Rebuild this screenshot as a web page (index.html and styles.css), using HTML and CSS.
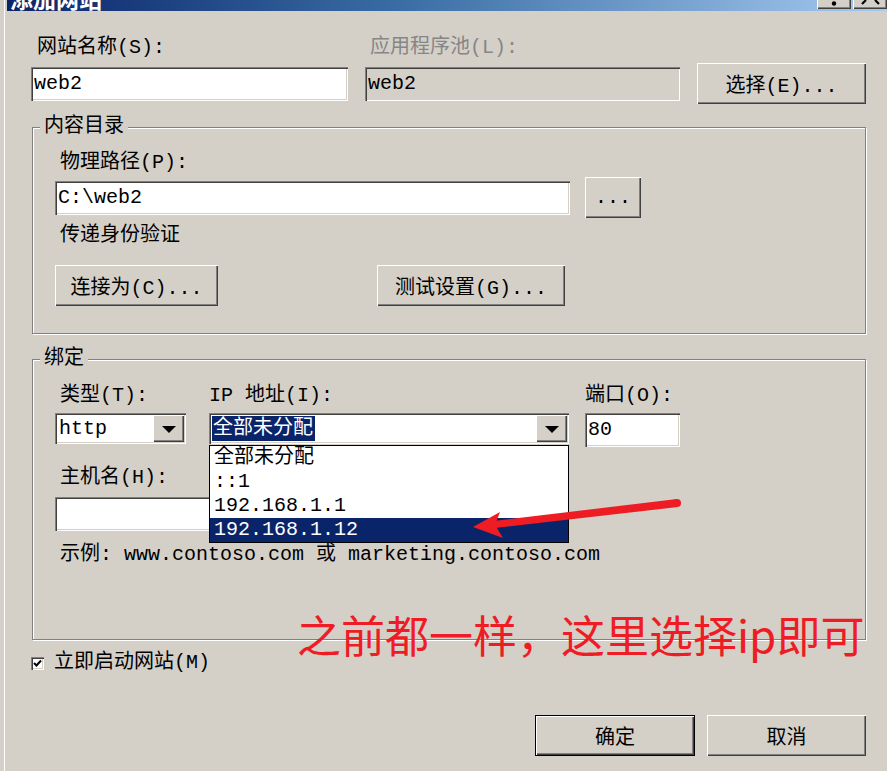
FILE: index.html
```html
<!DOCTYPE html>
<html lang="zh-CN">
<head>
    <meta charset="UTF-8">
    <title>添加网站</title>
    <link rel="stylesheet" href="styles.css">
</head>
<body>
    <div class="window">
        <div class="titlebar">
            <span class="title">添加网站</span>
            <div class="caption">
                <span class="cap-btn"><svg width="34" height="9"><circle cx="17" cy="3.5" r="2.2" fill="#000"/></svg></span>
                <span class="cap-btn"><svg width="34" height="9"><path d="M13 0 L9 4 M22 0 L26 4" stroke="#000" stroke-width="2.2" fill="none"/></svg></span>
            </div>
        </div>

        <div class="content">
            <div class="site-row">
                <div class="lbl lbl-site">网站名称(S):</div>
                <div class="lbl lbl-pool">应用程序池(L):</div>
                <div></div>
                <div class="field">web2</div>
                <div class="field readonly">web2</div>
                <button class="btn">选择(E)...</button>
            </div>

            <div class="group group-content">
                <div class="group-title">内容目录</div>
                <div class="group-body">
                    <div class="lbl lbl-path">物理路径(P):</div>
                    <div class="path-row">
                        <div class="field field-path">C:\web2</div>
                        <button class="btn btn-browse">...</button>
                    </div>
                    <div class="lbl lbl-auth">传递身份验证</div>
                    <div class="btn-row">
                        <button class="btn btn-connect">连接为(C)...</button>
                        <button class="btn btn-test">测试设置(G)...</button>
                    </div>
                </div>
            </div>

            <div class="group group-bind">
                <div class="group-title">绑定</div>
                <div class="group-body">
                    <div class="bind-row">
                        <div class="col col-type">
                            <div class="lbl lbl-type">类型(T):</div>
                            <div class="select">
                                <span class="select-text">http</span>
                                <span class="select-arrow"></span>
                            </div>
                        </div>
                        <div class="col col-ip">
                            <div class="lbl">IP 地址(I):</div>
                            <div class="select">
                                <span class="select-text"><span class="sel-hl">全部未分配</span></span>
                                <span class="select-arrow"></span>
                                <div class="dropdown">
                                    <div class="dropdown-item">全部未分配</div>
                                    <div class="dropdown-item">::1</div>
                                    <div class="dropdown-item">192.168.1.1</div>
                                    <div class="dropdown-item active">192.168.1.12</div>
                                </div>
                            </div>
                        </div>
                        <div class="col col-port">
                            <div class="lbl">端口(O):</div>
                            <div class="field field-port">80</div>
                        </div>
                    </div>
                    <div class="lbl lbl-host">主机名(H):</div>
                    <div class="field field-host"></div>
                    <div class="lbl lbl-example">示例: www.contoso.com 或 marketing.contoso.com</div>
                </div>
            </div>

            <div class="check-row">
                <span class="checkbox"><svg width="9" height="9"><path d="M1 4 L3.5 6.5 L8 1.5" stroke="#000" stroke-width="2" fill="none"/></svg></span>
                <span class="check-label">立即启动网站(M)</span>
            </div>

            <div class="dialog-btns">
                <button class="btn btn-ok">确定</button>
                <button class="btn btn-cancel">取消</button>
            </div>
        </div>
    </div>

    <!-- anotaciones encima del dialogo -->
    <svg class="arrow" width="887" height="771">
        <polygon points="677,499 678,507 495,528 494,521" fill="#ee1d23"/>
        <circle cx="677" cy="503" r="4" fill="#ee1d23"/>
        <polygon points="473,527 500,512 495,525 503,538" fill="#ee1d23"/>
    </svg>
    <div class="note">之前都一样，这里选择ip即可</div>
</body>
</html>
```

FILE: styles.css
```css
body {
    margin: 0;
    width: 887px;
    height: 771px;
    overflow: hidden;
    position: relative;
    background-color: #d4d0c8;
    font-family: "Liberation Mono", "Noto Sans CJK SC", monospace;
    font-size: 20px;
    color: #000;
}
.window {
    margin-left: 4px;
    border-left: 1px solid #fff;
    height: 771px;
    box-sizing: border-box;
}
.titlebar {
    height: 11px;
    margin-left: 2px;
    display: flex;
    overflow: hidden;
    background: linear-gradient(to right, #0a246a, #3a6ea5 45%, #a6caf0);
}
.title {
    color: #fff;
    font-family: "Noto Sans CJK SC", sans-serif;
    font-weight: bold;
    font-size: 23px;
    line-height: 24px;
    margin-top: -14px;
    padding-left: 3px;
}
.caption {
    margin-left: auto;
    display: flex;
    gap: 2px;
}
.cap-btn {
    display: block;
    width: 34px;
    height: 9px;
    background-color: #d4d0c8;
    box-shadow: inset 1px 0 #fff, inset -1px -1px #404040, inset -2px -2px #808080;
}
.cap-btn svg {
    display: block;
}
.content {
    padding: 25px 21px 0 26px;
}
.lbl {
    line-height: 24px;
    white-space: nowrap;
}
.site-row {
    display: grid;
    grid-template-columns: 317px 315px 1fr;
    column-gap: 17px;
}
.lbl-site {
    padding-left: 6px;
    margin-bottom: 3px;
}
.lbl-pool {
    padding-left: 5px;
    color: #868686;
}
.field {
    height: 34px;
    box-sizing: border-box;
    padding-left: 3px;
    line-height: 34px;
    background-color: #fff;
    align-self: center;
    box-shadow: inset 1px 1px #808080, inset 2px 2px #404040, inset -1px -1px #fff, inset -2px -2px #d4d0c8;
}
.field.readonly {
    background-color: #d4d0c8;
}
.btn {
    height: 41px;
    border: none;
    padding: 0;
    font: inherit;
    color: #000;
    background-color: #d4d0c8;
    box-shadow: inset 1px 1px #fff, inset -1px -1px #404040, inset -2px -2px #808080;
    align-self: center;
}
.group {
    margin: 23px 0 0 1px;
    border: 1px solid #808080;
    box-shadow: inset 1px 1px #fff, 1px 1px #fff;
}
.group-title {
    width: fit-content;
    margin: -13px 0 0 7px;
    padding: 0 4px;
    line-height: 24px;
    background-color: #d4d0c8;
}
.group-body {
    padding: 0 0 27px 22px;
}
.lbl-path {
    margin-top: 12px;
    padding-left: 5px;
}
.path-row {
    display: flex;
    align-items: center;
    height: 41px;
    margin-top: 2px;
}
.field-path {
    width: 515px;
}
.btn-browse {
    width: 56px;
    margin-left: 15px;
}
.lbl-auth {
    margin-top: 6px;
    padding-left: 5px;
}
.btn-row {
    display: flex;
    margin-top: 17px;
}
.btn-connect {
    width: 163px;
}
.btn-test {
    width: 188px;
    margin-left: 159px;
}
.group-bind {
    margin-top: 25px;
}
.group-bind .group-body {
    padding-bottom: 72px;
}
.bind-row {
    display: flex;
    align-items: flex-start;
    margin-top: 13px;
}
.col .lbl {
    margin-bottom: 5px;
}
.col-type {
    width: 131px;
}
.lbl-type {
    padding-left: 5px;
}
.col-ip {
    width: 360px;
    margin-left: 23px;
}
.col-port {
    width: 95px;
    margin-left: 16px;
}
.select {
    position: relative;
    display: flex;
    height: 31px;
    box-sizing: border-box;
    padding: 2px;
    background-color: #fff;
    box-shadow: inset 1px 1px #808080, inset 2px 2px #404040, inset -1px -1px #fff, inset -2px -2px #d4d0c8;
}
.select-text {
    flex: 1;
    line-height: 27px;
    padding-left: 2px;
    white-space: nowrap;
}
.col-ip .select-text {
    padding-left: 1px;
}
.sel-hl {
    display: inline-block;
    margin-top: 1px;
    padding: 0 2px 0 1px;
    line-height: 25px;
    color: #fff;
    background-color: #0a246a;
    vertical-align: top;
}
.select-arrow {
    width: 31px;
    height: 27px;
    display: flex;
    align-items: center;
    justify-content: center;
    background-color: #d4d0c8;
    box-shadow: inset 1px 1px #fff, inset -1px -1px #404040, inset -2px -2px #808080;
}
.select-arrow::after {
    content: "";
    border-left: 7px solid transparent;
    border-right: 7px solid transparent;
    border-top: 7px solid #000;
    margin-top: 2px;
}
.dropdown {
    position: absolute;
    left: 0;
    top: 32px;
    width: 360px;
    box-sizing: border-box;
    border: 1px solid #000;
    background-color: #fff;
    z-index: 2;
}
.dropdown-item {
    height: 24px;
    line-height: 24px;
    padding-left: 4px;
    white-space: nowrap;
}
.dropdown-item.active {
    color: #fff;
    background-color: #0a246a;
}
.field-port {
    width: 95px;
}
.lbl-host {
    margin-top: 19px;
    padding-left: 5px;
}
.field-host {
    width: 514px;
    margin-top: 7px;
}
.lbl-example {
    margin-top: 12px;
    padding-left: 5px;
}
.check-row {
    display: flex;
    align-items: center;
    margin-top: 11px;
    line-height: 24px;
}
.checkbox {
    width: 13px;
    height: 13px;
    box-sizing: border-box;
    display: flex;
    align-items: center;
    justify-content: center;
    background-color: #fff;
    box-shadow: inset 1px 1px #808080, inset 2px 2px #404040, inset -1px -1px #fff, inset -2px -2px #d4d0c8;
}
.check-label {
    margin-left: 10px;
}
.dialog-btns {
    display: flex;
    justify-content: flex-end;
    gap: 12px;
    margin-top: 40px;
}
.btn-ok {
    width: 160px;
    border: 1px solid #000;
    box-shadow: inset 1px 1px #fff, inset -1px -1px #404040, inset -2px -2px #808080;
}
.btn-cancel {
    width: 159px;
}
.arrow {
    position: absolute;
    left: 0;
    top: 0;
    pointer-events: none;
    z-index: 5;
}
.note {
    position: absolute;
    left: 297px;
    top: 612px;
    font-family: "Noto Sans CJK SC", sans-serif;
    font-size: 44px;
    line-height: 44px;
    color: #ee1c24;
    white-space: nowrap;
    z-index: 5;
}
```
